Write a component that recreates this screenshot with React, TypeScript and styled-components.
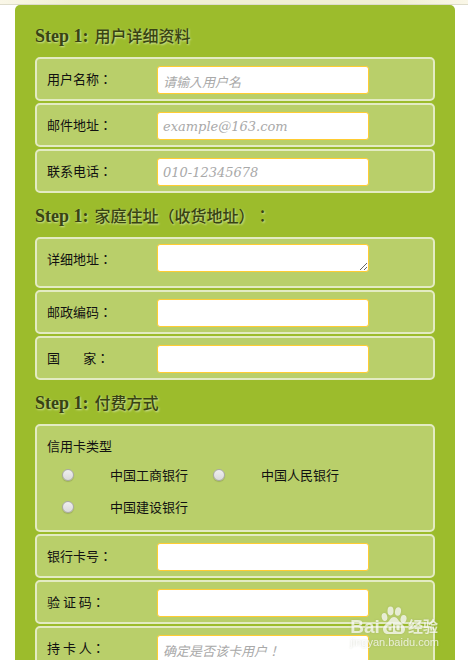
import React from 'react';
import styled, { createGlobalStyle } from 'styled-components';

const GlobalStyle = createGlobalStyle`
  html {
    scrollbar-width: none;
  }
  body {
    margin: 0;
    background: #fff;
    color: #111;
    font: 13px/26px 'Noto Sans CJK SC', sans-serif;
    text-spacing-trim: space-all;
  }
  *, *::before, *::after {
    box-sizing: border-box;
  }
`;

const TopStrip = styled.header`
  height: 5px;
  background: linear-gradient(90deg, #faf7e8, #f0efd2 15%, #f0efd2 85%, #faf7e8);
  border-bottom: 1px solid #dedccb;
`;

const Page = styled.main`
  padding: 0 13px 0 15px;
`;

const Form = styled.form`
  padding: 8px 20px 20px;
  background: #9cbc2c;
  border-radius: 5px;
`;

const Section = styled.fieldset`
  min-width: 0;
  margin: 0;
  padding: 0;
  border: 0;
`;

const Heading = styled.legend`
  display: block;
  height: 44px;
  padding: 0;
  color: #384313;
  font: 500 16px/44px 'Noto Sans CJK SC', sans-serif;
  text-shadow: 1px 1px 2px #d3e39a;
`;

const Step = styled.span`
  margin-right: 6px;
  font: 700 18px/44px 'Liberation Serif', serif;
`;

const Centered = styled.span`
  font-family: 'Noto Sans CJK TC', sans-serif;
`;

const Rows = styled.div`
  display: grid;
  gap: 2px;
`;

const Row = styled.div<{ $tall?: boolean }>`
  display: flex;
  align-items: flex-start;
  padding: ${(p) => (p.$tall ? '5px 10px 12px' : '7px 10px 5px')};
  background: #b9cf6a;
  border: 2px solid #e3ebc3;
  border-radius: 5px;
  line-height: ${(p) => (p.$tall ? 30 : 26)}px;
`;

const Label = styled.label`
  flex: 0 0 110px;
  white-space: pre;
`;

const Input = styled.input<{ $latin?: boolean }>`
  flex: 0 1 212px;
  min-width: 0;
  height: 28px;
  padding: ${(p) => (p.$latin ? '0 5px' : '3px 5px 0')};
  background: #fff;
  border: 1px solid #fc3;
  border-radius: 3px;
  outline: 0;
  color: #222;
  font: ${(p) =>
    p.$latin
      ? "italic 13px 'DejaVu Serif', serif"
      : "italic 13px 'Noto Sans CJK TC', sans-serif"};
  &::placeholder {
    color: #a9a9a9;
    opacity: 1;
  }
`;

const TextArea = styled.textarea`
  flex: 0 1 212px;
  min-width: 0;
  height: 28px;
  padding: 3px 5px;
  background: #fff;
  border: 1px solid #fc3;
  border-radius: 3px;
  outline: 0;
  font: italic 13px 'Noto Sans CJK SC', sans-serif;
  overflow: auto;
  resize: both;
`;

const CardBox = styled.div`
  padding: 6px 10px 7px;
  background: #b9cf6a;
  border: 2px solid #e3ebc3;
  border-radius: 5px;
`;

const CardTitle = styled.div`
  line-height: 27px;
`;

const Cards = styled.div`
  display: grid;
  grid-template-columns: repeat(auto-fill, 151px);
  grid-auto-rows: 32px;
`;

const Card = styled.label`
  display: flex;
  align-items: center;
  gap: 36px;
  padding-left: 15px;
  line-height: 32px;
  white-space: nowrap;
`;

const Radio = styled.input`
  appearance: none;
  width: 12px;
  height: 12px;
  margin: 0;
  border: 1px solid #a9a9a5;
  border-radius: 50%;
  background: linear-gradient(#efefef, #dadada);
  box-shadow: 0 1px 1px rgba(0, 0, 0, 0.15);
  &:checked {
    background: radial-gradient(#444 30%, #e4e4e4 40%);
  }
`;

const Watermark = styled.aside`
  position: fixed;
  right: 29px;
  bottom: 11px;
  color: rgba(255, 255, 255, 0.72);
  filter: drop-shadow(0 0 1px rgba(120, 130, 90, 0.35));
  pointer-events: none;
`;

const Brand = styled.div`
  display: flex;
  align-items: flex-end;
  gap: 1px;
  height: 30px;
  font: 700 19px/18px 'Liberation Sans', sans-serif;
`;

const PawIcon = styled.svg`
  width: 26px;
  height: 28px;
  margin-bottom: 2px;
`;

const BrandCjk = styled.span`
  font: 700 15px/20px 'Noto Sans CJK SC', sans-serif;
`;

const Site = styled.div`
  font: 11px/13px 'Liberation Sans', sans-serif;
`;

function Colon() {
  return <Centered>：</Centered>;
}

interface FieldProps {
  id: string;
  label: string;
  type?: string;
  placeholder?: string;
  latin?: boolean;
}

function Field({ id, label, type = 'text', placeholder, latin }: FieldProps) {
  return (
    <Row>
      <Label htmlFor={id}>
        {label}
        <Colon />
      </Label>
      <Input id={id} name={id} type={type} placeholder={placeholder} $latin={latin} />
    </Row>
  );
}

function Paw() {
  return (
    <PawIcon viewBox="0 0 26 28" fill="currentColor" aria-hidden="true">
      <ellipse cx="3.500" cy="11" rx="2.800" ry="4" transform="rotate(-12 3.5 11)" />
      <ellipse cx="9.500" cy="5" rx="3" ry="4.400" />
      <ellipse cx="17" cy="5.500" rx="3" ry="4.200" transform="rotate(10 17 5.5)" />
      <ellipse cx="22.500" cy="13" rx="3" ry="4" transform="rotate(12 22.5 13)" />
      <path
        fillRule="evenodd"
        d="M13 11c3 0 4 3 6 5s5 4 5 7-2 5-5 5H7c-3 0-5-2-5-5s3-5 5-7 3-5 6-5zM10.500 17v2.800c-3-.8-5 .5-5 3s2 3.700 6.500 2.900V17zM10.500 21.300v3c-2 .5-3 .2-3-1.400s1-2.100 3-1.600zM14 19.500v3.500c0 2.500 2 3 6 2.500v-6h-1.500v4.700c-2 .3-3 0-3-1.200v-3.500z"
      />
    </PawIcon>
  );
}

export default function App() {
  return (
    <>
      <GlobalStyle />
      <TopStrip />
      <Page>
        <Form>
          <Section>
            <Heading>
              <Step>Step 1:</Step>用户详细资料
            </Heading>
            <Rows>
              <Field id="name" label="用户名称" placeholder="请输入用户名" />
              <Field id="email" label="邮件地址" type="email" placeholder="example@163.com" latin />
              <Field id="phone" label="联系电话" type="tel" placeholder="010-12345678" latin />
            </Rows>
          </Section>
          <Section>
            <Heading>
              <Step>Step 1:</Step>家庭住址<Centered>（</Centered>收货地址<Centered>）：</Centered>
            </Heading>
            <Rows>
              <Row $tall>
                <Label htmlFor="address">
                  详细地址
                  <Colon />
                </Label>
                <TextArea id="address" name="address" rows={1} />
              </Row>
              <Field id="postcode" label="邮政编码" />
              <Field id="country" label={'国        家'} />
            </Rows>
          </Section>
          <Section>
            <Heading>
              <Step>Step 1:</Step>付费方式
            </Heading>
            <Rows>
              <CardBox role="radiogroup" aria-labelledby="card-type">
                <CardTitle id="card-type">信用卡类型</CardTitle>
                <Cards>
                  {['中国工商银行', '中国人民银行', '中国建设银行'].map((bank) => (
                    <Card key={bank}>
                      <Radio type="radio" name="card" value={bank} />
                      {bank}
                    </Card>
                  ))}
                </Cards>
              </CardBox>
              <Field id="card-number" label="银行卡号" />
              <Field id="security-code" label="验 证 码" />
              <Field id="card-holder" label="持 卡 人" placeholder="确定是否该卡用户！" />
            </Rows>
          </Section>
        </Form>
      </Page>
      <Watermark>
        <Brand>
          Bai
          <Paw />
          <BrandCjk>经验</BrandCjk>
        </Brand>
        <Site>jingyan.baidu.com</Site>
      </Watermark>
    </>
  );
}
